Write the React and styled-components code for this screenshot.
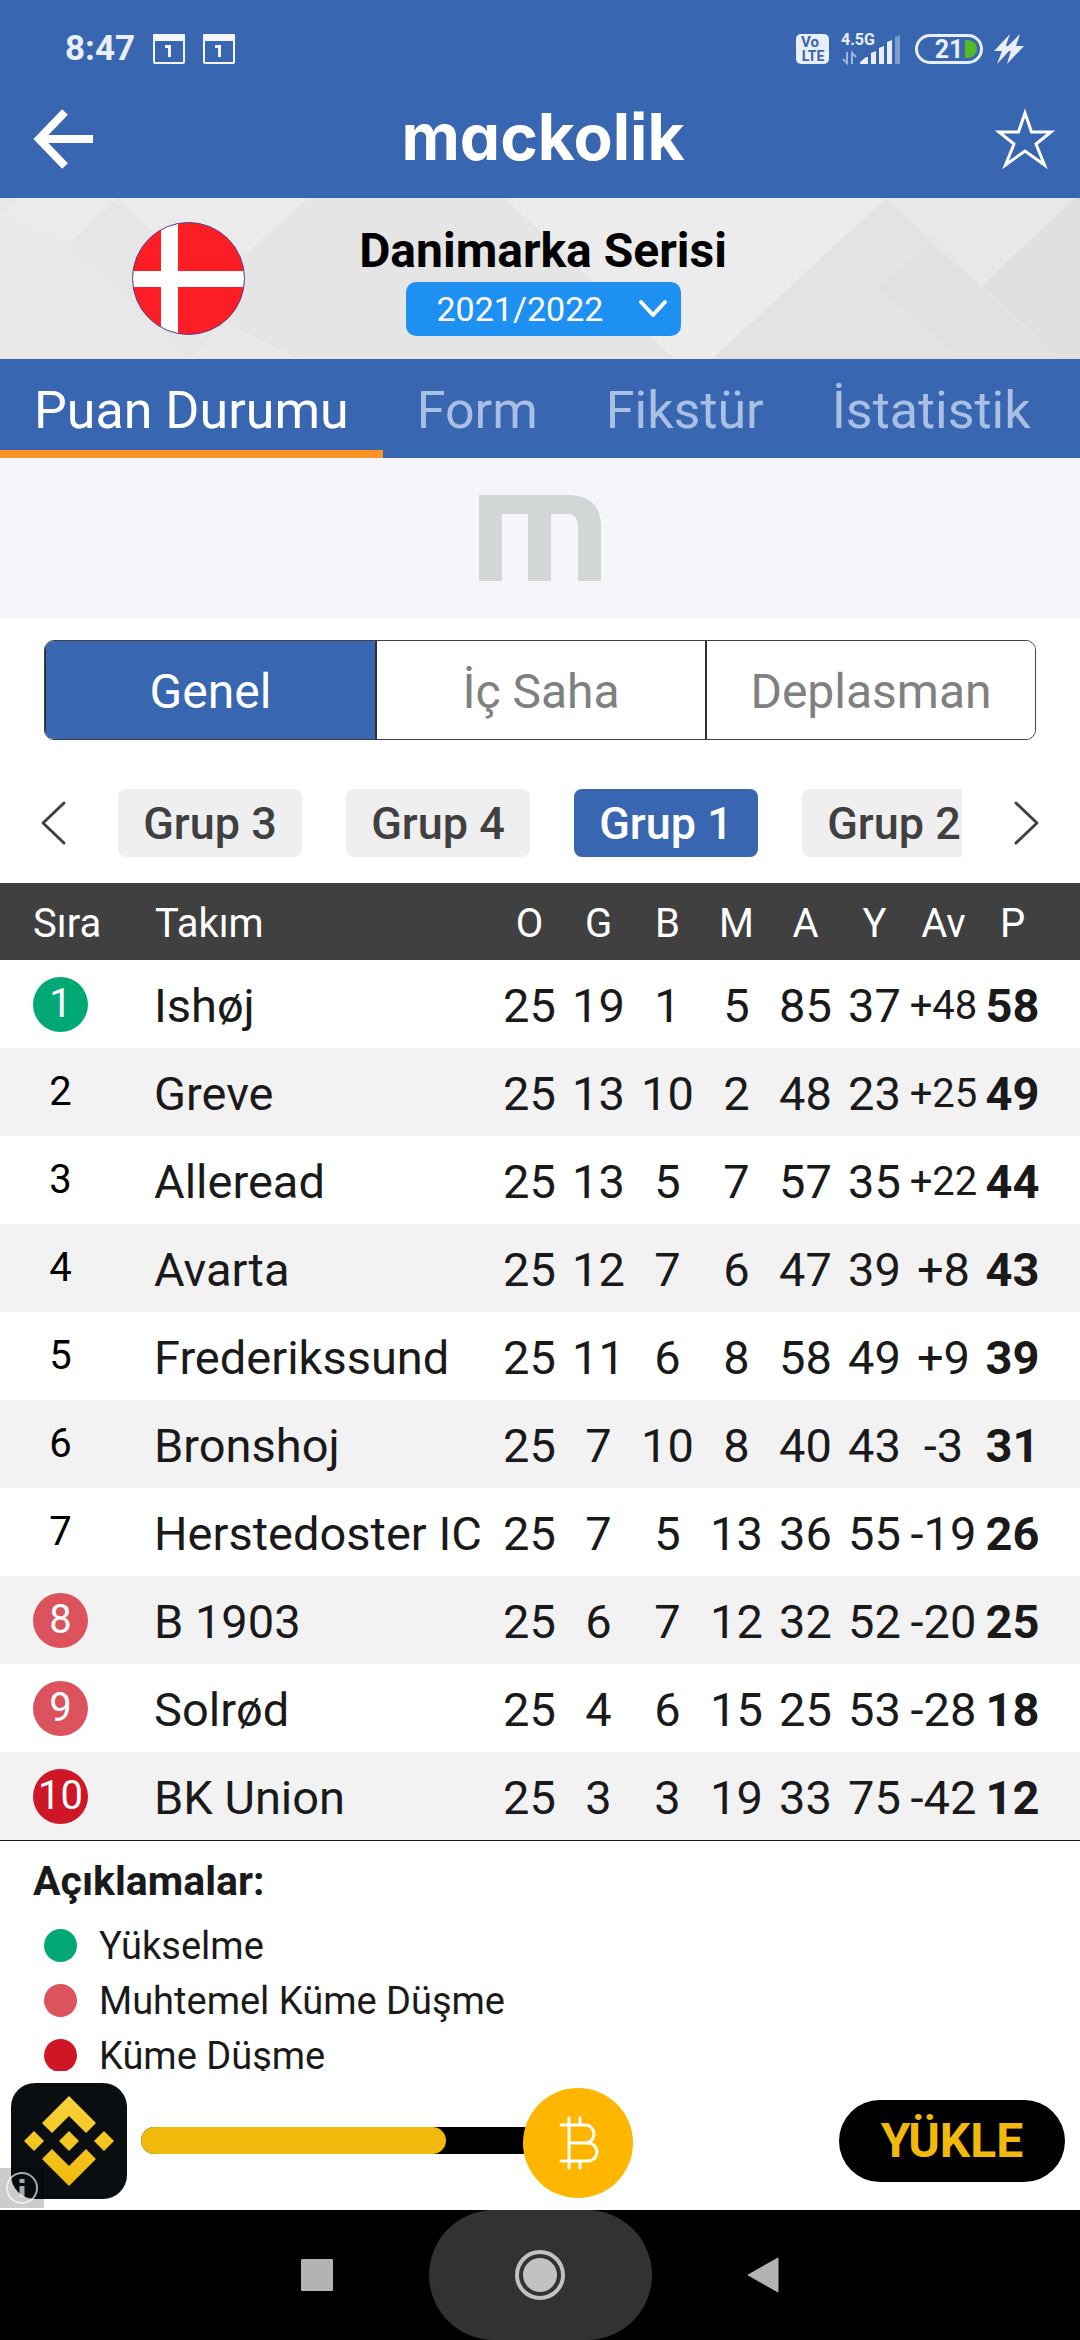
import React from "react";
import styled, { createGlobalStyle, css } from "styled-components";

const blue = "#3966b0";

const GlobalStyle = createGlobalStyle`
  *, *::before, *::after { box-sizing: border-box; }
  html, body { margin: 0; padding: 0; background: #fff; }
  body { font-family: Roboto, "Liberation Sans", sans-serif; color: #1a1a1a; }
  button, select { font-family: inherit; }
  button { margin: 0; padding: 0; border: 0; background: none; cursor: pointer; }
  svg { display: block; flex: none; overflow: visible; }
`;

const Page = styled.div`
  display: flex;
  flex-direction: column;
  height: 100vh;
  overflow: hidden;
  background: #fff;
`;

const StatusBar = styled.div`
  flex: none;
  display: flex;
  align-items: center;
  justify-content: space-between;
  height: 80px;
  padding: 18px 56px 0 65px;
  background: ${blue};
  color: #e9effa;
`;

const StatusGroup = styled.div`
  display: flex;
  align-items: center;
  gap: ${(p) => p.$gap}px;
`;

const Clock = styled.time`
  font-size: 35px;
  line-height: 40px;
  font-weight: 700;
`;

const Header = styled.header`
  flex: none;
  display: grid;
  grid-template-columns: 1fr auto 1fr;
  align-items: center;
  height: 118px;
  padding: 0 26px 0 32px;
  background: ${blue};
`;

const IconButton = styled.button`
  justify-self: ${(p) => p.$side || "center"};
  display: flex;
  align-items: center;
  justify-content: center;
`;

const Brand = styled.h1`
  margin: 0;
  padding-bottom: 4px;
  color: #fff;
  font-family: Inter, Lato, sans-serif;
  font-feature-settings: "cv11", "ss07";
  font-weight: 700;
  font-size: 64px;
  line-height: 112px;
`;

const Banner = styled.section`
  flex: none;
  position: relative;
  display: grid;
  grid-template-columns: 245px 1fr 239px;
  align-items: center;
  height: 161px;
  background: #e9e9e9;
`;

const BannerArt = styled.svg`
  position: absolute;
  inset: 0;
  width: 100%;
  height: 100%;
`;

const FlagSlot = styled.div`
  position: relative;
  display: flex;
  justify-content: flex-end;
`;

const BannerInfo = styled.div`
  position: relative;
  display: flex;
  flex-direction: column;
  align-items: center;
  gap: 3px;
  padding-top: 1px;
`;

const LeagueName = styled.h2`
  margin: 0;
  color: #000;
  font-size: 48px;
  line-height: 56px;
  font-weight: 700;
`;

const SeasonPicker = styled.div`
  position: relative;
  display: flex;
  align-items: center;
  width: 275px;
  height: 54px;
  border-radius: 10px;
  background: #1e90f2;
  svg { position: absolute; right: 13px; pointer-events: none; }
`;

const SeasonSelect = styled.select`
  appearance: none;
  width: 100%;
  height: 100%;
  padding: 0 0 0 31px;
  border: 0;
  background: transparent;
  color: #fff;
  font-size: 34px;
  line-height: 54px;
`;

const Tabs = styled.nav`
  flex: none;
  display: flex;
  height: 99px;
  background: ${blue};
`;

const Tab = styled.a`
  padding: 6px 34px 0;
  border-bottom: 8px solid ${(p) => (p.$active ? "#fd9426" : "transparent")};
  color: ${(p) => (p.$active ? "#fff" : "#a9bfe4")};
  font-size: 52px;
  line-height: 92px;
  text-decoration: none;
  white-space: nowrap;
`;

const TopAd = styled.aside`
  flex: none;
  display: flex;
  align-items: center;
  justify-content: center;
  height: 160px;
  background: #f4f6fb;
`;

const Segments = styled.div`
  flex: none;
  display: grid;
  grid-template-columns: repeat(3, 1fr);
  height: 100px;
  margin: 22px 44px 0;
  border: 1px solid #404040;
  border-radius: 10px;
  overflow: hidden;
`;

const Segment = styled.button`
  padding-top: 4px;
  border-left: ${(p) => (p.$first ? "1px" : "2px")} solid #303030;
  background: ${(p) => (p.$active ? blue : "#fff")};
  color: ${(p) => (p.$active ? "#fff" : "#808080")};
  font-size: 48px;
  line-height: 94px;
`;

const Groups = styled.div`
  flex: none;
  display: flex;
  align-items: center;
  height: 143px;
  padding: 49px 40px 26px;
  gap: 51px;
`;

const GroupList = styled.div`
  flex: 1;
  display: flex;
  gap: 44px;
  min-width: 0;
  overflow: hidden;
`;

const GroupChip = styled.button`
  flex: none;
  width: 184px;
  height: 68px;
  padding-top: 2px;
  border-radius: 8px;
  background: ${(p) => (p.$active ? blue : "#efefef")};
  color: ${(p) => (p.$active ? "#fff" : "#404040")};
  font-size: 45px;
  line-height: 66px;
  font-weight: 500;
`;

const Scroller = styled.main`
  flex: 1;
  min-height: 0;
  overflow: hidden;
`;

const Table = styled.table`
  width: 100%;
  table-layout: fixed;
  border-collapse: collapse;
  border-bottom: 1px solid #1a1a1a;
`;

const Col = styled.col`
  width: ${(p) => (p.$w ? p.$w + "px" : "auto")};
`;

const HeadRow = styled.tr`
  height: 77px;
  background: #404040;
`;

const HeadCell = styled.th`
  padding: 4px 0 0 ${(p) => p.$left || 0}px;
  color: #fff;
  font-size: 40px;
  line-height: 73px;
  font-weight: 400;
  text-align: ${(p) => (p.$left ? "left" : "center")};
`;

const Row = styled.tr`
  height: 88px;
  &:nth-child(even) { background: #f2f2f2; }
`;

const cell = css`
  padding: 4px 0 0;
  font-size: 47px;
  line-height: 84px;
  white-space: nowrap;
`;

const RankCell = styled.td`
  padding: 0 0 0 33px;
`;

const Rank = styled.span`
  display: block;
  width: 55px;
  height: 55px;
  border-radius: 50%;
  background: ${(p) => p.$color || "transparent"};
  color: ${(p) => (p.$color ? "#fff" : "#000")};
  font-size: 40px;
  line-height: 54px;
  text-align: center;
`;

const TeamCell = styled.td`
  ${cell}
`;

const NumCell = styled.td`
  ${cell}
  font-size: ${(p) => (p.$small ? 40 : 47)}px;
  font-weight: ${(p) => (p.$bold ? 700 : 400)};
  text-align: center;
`;

const Legend = styled.section`
  padding: 16px 33px 0;
`;

const LegendTitle = styled.h3`
  margin: 0;
  font-size: 41px;
  line-height: 48px;
  font-weight: 700;
`;

const LegendList = styled.ul`
  margin: 13px 0 0;
  padding: 0 0 0 11px;
  list-style: none;
`;

const LegendItem = styled.li`
  display: flex;
  align-items: center;
  gap: 22px;
  height: 55px;
  font-size: 38px;
  line-height: 58px;
`;

const Dot = styled.span`
  width: 33px;
  height: 33px;
  border-radius: 50%;
  background: ${(p) => p.$color};
`;

const BottomAd = styled.aside`
  flex: none;
  position: relative;
  display: flex;
  align-items: center;
  height: 139px;
  padding: 0 15px 0 11px;
  background: #fff;
`;

const AppIcon = styled.div`
  display: flex;
  align-items: center;
  justify-content: center;
  width: 116px;
  height: 116px;
  border-radius: 24px;
  background: #0b0e11;
`;

const Track = styled.div`
  display: flex;
  align-items: center;
  width: 396px;
  height: 27px;
  margin-left: 14px;
  border-radius: 14px;
  background: #000;
`;

const Fill = styled.div`
  width: 305px;
  height: 27px;
  border-radius: 14px;
  background: #f0b90b;
`;

const Coin = styled.div`
  display: flex;
  align-items: center;
  justify-content: center;
  width: 110px;
  height: 110px;
  margin: 4px auto 0 -14px;
  border-radius: 50%;
  background: #ffb600;
`;

const InstallButton = styled.button`
  width: 226px;
  height: 82px;
  border-radius: 41px;
  background: #000;
  color: #f0b90b;
  font-size: 48px;
  line-height: 82px;
  font-weight: 700;
`;

const AdInfo = styled.button`
  position: absolute;
  left: 0;
  bottom: 2px;
  display: flex;
  align-items: center;
  justify-content: center;
  width: 44px;
  height: 40px;
  background: rgba(0, 0, 0, 0.2);
`;

const SystemNav = styled.nav`
  flex: none;
  display: flex;
  align-items: center;
  justify-content: center;
  height: 130px;
  background: #000;
`;

const NavButton = styled.button`
  display: flex;
  align-items: center;
  justify-content: center;
  width: 223px;
  height: 130px;
  border-radius: 65px;
  background: ${(p) => (p.$pressed ? "#323232" : "transparent")};
`;

const GREEN = "#00a874";
const PINK = "#dc525d";
const RED = "#ce1626";

const columns = ["O", "G", "B", "M", "A", "Y", "Av", "P"];

const teams = [
  ["Ishøj", GREEN, 25, 19, 1, 5, 85, 37, "+48", 58],
  ["Greve", null, 25, 13, 10, 2, 48, 23, "+25", 49],
  ["Alleread", null, 25, 13, 5, 7, 57, 35, "+22", 44],
  ["Avarta", null, 25, 12, 7, 6, 47, 39, "+8", 43],
  ["Frederikssund", null, 25, 11, 6, 8, 58, 49, "+9", 39],
  ["Bronshoj", null, 25, 7, 10, 8, 40, 43, "-3", 31],
  ["Herstedoster IC", null, 25, 7, 5, 13, 36, 55, "-19", 26],
  ["B 1903", PINK, 25, 6, 7, 12, 32, 52, "-20", 25],
  ["Solrød", PINK, 25, 4, 6, 15, 25, 53, "-28", 18],
  ["BK Union", RED, 25, 3, 3, 19, 33, 75, "-42", 12],
];

const legend = [
  ["Yükselme", GREEN],
  ["Muhtemel Küme Düşme", PINK],
  ["Küme Düşme", RED],
];

const SvgText = styled.text`
  font-family: Roboto, "Liberation Sans", sans-serif;
  font-weight: 700;
`;

function CalendarIcon() {
  return (
    <svg width="32" height="30" viewBox="0 0 32 30" aria-hidden="true">
      <rect x="1" y="1" width="30" height="28" rx="1" fill="none" stroke="#f3f6fc" strokeWidth="2" />
      <rect x="0" y="0" width="32" height="7" rx="1" fill="#f3f6fc" />
      <path d="M12 12.5h4.500V23" fill="none" stroke="#f3f6fc" strokeWidth="3" />
    </svg>
  );
}

function VolteIcon() {
  return (
    <svg width="33" height="30" viewBox="0 0 33 30" aria-hidden="true">
      <rect width="33" height="30" rx="5" fill="#e9effa" />
      <SvgText x="14" y="13" fontSize="15" textAnchor="middle" fill={blue}>Vo</SvgText>
      <SvgText x="17" y="27" fontSize="14" textAnchor="middle" fill={blue}>LTE</SvgText>
    </svg>
  );
}

function SignalIcon() {
  return (
    <svg width="64" height="34" viewBox="0 0 64 34" aria-hidden="true">
      <SvgText x="1" y="13" fontSize="16" fill="#e9effa">4.5G</SvgText>
      <g fill="none" stroke="#9db4dc" strokeWidth="2">
        <path d="M7 20v11L3 27" />
        <path d="M12 32V21l4 4" />
      </g>
      <g fill="#e9effa">
        <path d="M20 32v-2l6-5h2v7z" />
        <path d="M31 32V21l5-2v13z" />
        <path d="M39 32V16l5-2v18z" />
        <path d="M47 32V10l5-2v24z" />
      </g>
      <path d="M55 32V5l5-2v29z" fill="#7f9ccf" />
    </svg>
  );
}

function BatteryIcon() {
  return (
    <svg width="68" height="30" viewBox="0 0 68 30" aria-hidden="true">
      <rect x="1.500" y="1.500" width="65" height="27" rx="13.500" fill="none" stroke="#e9effa" strokeWidth="3" />
      <SvgText x="34" y="24" fontSize="25" textAnchor="middle" fill="#e9effa">21</SvgText>
      <path d="M50 6h3a9 9 0 0 1 0 18h-3z" fill="#52b925" />
    </svg>
  );
}

function BoltIcon() {
  return (
    <svg width="30" height="30" viewBox="0 0 30 30" aria-hidden="true">
      <path d="M16 0 0 17h8L3 30l12-13h-5z M26 0 13 13h5L13 30 30 12h-8z" fill="#e9effa" />
      <path d="M9 12h14v5H7z" fill="#e9effa" />
    </svg>
  );
}

function BannerBackdrop() {
  return (
    <BannerArt viewBox="0 0 1080 161" preserveAspectRatio="none" aria-hidden="true">
      <path d="M0 18 18 0H118L70 45z" fill="#ebebeb" />
      <path d="M118 0 240 108 190 161 70 45z" fill="#e6e6e6" />
      <path d="M0 105 70 45 190 161H0z" fill="#e8e8e8" />
      <path d="M118 0H308L240 60 200 80z" fill="#ebebeb" />
      <path d="M308 0H505L675 161H426L300 161 190 108z" fill="#e5e5e5" />
      <path d="M505 0H886L712 161H675z" fill="#ececec" />
      <path d="M886 0 1060 161H712z" fill="#e3e3e3" />
      <path d="M886 0H1075L982 88z" fill="#e8e8e8" />
      <path d="M1075 0h5v161h-20L982 88z" fill="#e0e0e0" />
      <path d="M930 45 1060 161H960L880 90z" fill="#e1e1e1" />
    </BannerArt>
  );
}

function Flag() {
  return (
    <svg width="113" height="113" viewBox="0 0 113 113" role="img" aria-label="Danimarka">
      <clipPath id="flag-disc"><circle cx="56.500" cy="56.500" r="56" /></clipPath>
      <g clipPath="url(#flag-disc)">
        <rect width="113" height="113" fill="#fd1d24" />
        <rect x="29" width="17" height="113" fill="#fff" />
        <rect y="49" width="113" height="16" fill="#fff" />
      </g>
      <circle cx="56.500" cy="56.500" r="56" fill="none" stroke="#5a3f8c" strokeWidth="1" />
    </svg>
  );
}

function MarkIcon() {
  return (
    <svg width="122" height="86" viewBox="0 0 122 86" aria-hidden="true">
      <g fill="#d2d6d5">
        <rect width="82" height="19" />
        <rect width="23" height="86" />
        <rect x="49" width="23" height="86" />
        <path d="M80 0H88Q122 0 122 32V86H99V32Q99 19 88 19H80z" />
      </g>
    </svg>
  );
}

function Chevron({ d, w, h, color, stroke }) {
  return (
    <svg width={w} height={h} viewBox={`0 0 ${w} ${h}`} aria-hidden="true">
      <path d={d} fill="none" stroke={color} strokeWidth={stroke} strokeLinecap="round" strokeLinejoin="round" />
    </svg>
  );
}

export default function App() {
  return (
    <Page>
      <GlobalStyle />
      <StatusBar>
        <StatusGroup $gap={18}>
          <Clock>8:47</Clock>
          <CalendarIcon />
          <CalendarIcon />
        </StatusGroup>
        <StatusGroup $gap={11}>
          <VolteIcon />
          <SignalIcon />
          <BatteryIcon />
          <BoltIcon />
        </StatusGroup>
      </StatusBar>

      <Header>
        <IconButton $side="start" aria-label="Geri">
          <svg width="62" height="60" viewBox="0 0 62 60" aria-hidden="true">
            <path d="M33 3 7 30l26 27M7 30h54" fill="none" stroke="#fff" strokeWidth="8" />
          </svg>
        </IconButton>
        <Brand>mackolik</Brand>
        <IconButton $side="end" aria-label="Favorilere ekle">
          <svg width="58" height="58" viewBox="0 0 58 58" aria-hidden="true">
            <path d="M29 3 35.500 22H55L40 34l8.500 21L29 41 9.500 55 18 34 3 22h19.500z" fill="none" stroke="#fff" strokeWidth="3" />
          </svg>
        </IconButton>
      </Header>

      <Banner>
        <BannerBackdrop />
        <FlagSlot><Flag /></FlagSlot>
        <BannerInfo>
          <LeagueName>Danimarka Serisi</LeagueName>
          <SeasonPicker>
            <SeasonSelect aria-label="Sezon" defaultValue="2021/2022">
              <option>2021/2022</option>
            </SeasonSelect>
            <Chevron w={30} h={20} d="M3 3l12 13L27 3" color="#fff" stroke={4} />
          </SeasonPicker>
        </BannerInfo>
      </Banner>

      <Tabs>
        <Tab href="#puan" $active>Puan Durumu</Tab>
        <Tab href="#form">Form</Tab>
        <Tab href="#fikstur">Fikstür</Tab>
        <Tab href="#istatistik">İstatistik</Tab>
      </Tabs>

      <TopAd><MarkIcon /></TopAd>

      <Segments>
        <Segment $first $active>Genel</Segment>
        <Segment>İç Saha</Segment>
        <Segment>Deplasman</Segment>
      </Segments>

      <Groups>
        <IconButton aria-label="Önceki gruplar">
          <Chevron w={27} h={44} d="M24 2 3 22l21 20" color="#404040" stroke={3} />
        </IconButton>
        <GroupList>
          <GroupChip>Grup 3</GroupChip>
          <GroupChip>Grup 4</GroupChip>
          <GroupChip $active>Grup 1</GroupChip>
          <GroupChip>Grup 2</GroupChip>
        </GroupList>
        <IconButton aria-label="Sonraki gruplar">
          <Chevron w={27} h={44} d="M3 2l21 20L3 42" color="#404040" stroke={3} />
        </IconButton>
      </Groups>

      <Scroller>
        <Table>
          <colgroup>
            <Col $w={154} />
            <Col />
            {columns.map((c) => <Col key={c} $w={69} />)}
            <Col $w={33} />
          </colgroup>
          <thead>
            <HeadRow>
              <HeadCell $left={33}>Sıra</HeadCell>
              <HeadCell $left={1}>Takım</HeadCell>
              {columns.map((c) => <HeadCell key={c}>{c}</HeadCell>)}
              <HeadCell as="td" />
            </HeadRow>
          </thead>
          <tbody>
            {teams.map(([name, color, ...stats], i) => (
              <Row key={name}>
                <RankCell><Rank $color={color}>{i + 1}</Rank></RankCell>
                <TeamCell>{name}</TeamCell>
                {stats.map((v, j) => (
                  <NumCell key={columns[j]} $bold={j === 7} $small={/^\+\d\d/.test(v)}>{v}</NumCell>
                ))}
                <NumCell />
              </Row>
            ))}
          </tbody>
        </Table>
        <Legend>
          <LegendTitle>Açıklamalar:</LegendTitle>
          <LegendList>
            {legend.map(([label, color]) => (
              <LegendItem key={label}><Dot $color={color} />{label}</LegendItem>
            ))}
          </LegendList>
        </Legend>
      </Scroller>

      <BottomAd>
        <AppIcon>
          <svg width="90" height="90" viewBox="0 0 90 90" aria-hidden="true">
            <linearGradient id="gold" gradientUnits="userSpaceOnUse" x1="0" y1="0" x2="0" y2="90">
              <stop offset="0" stopColor="#f8d33a" />
              <stop offset="1" stopColor="#f0b90b" />
            </linearGradient>
            <g fill="url(#gold)">
              <path d="M45 0 72 27 62 37 45 20 28 37 18 27z" />
              <path d="M45 90 72 63 62 53 45 70 28 53 18 63z" />
              <path d="M45 35 55 45 45 55 35 45z" />
              <path d="M10 35 20 45 10 55 0 45z" />
              <path d="M80 35 90 45 80 55 70 45z" />
            </g>
          </svg>
        </AppIcon>
        <Track><Fill /></Track>
        <Coin>
          <svg width="42" height="54" viewBox="0 0 42 54" aria-hidden="true">
            <path d="M4 9h24a9 9 0 0 1 0 18H12M28 27h3a9 9 0 0 1 0 18H4M12 2v50M23 2v7M23 45v7" fill="none" stroke="#fff" strokeWidth="3" strokeLinecap="round" />
          </svg>
        </Coin>
        <InstallButton>YÜKLE</InstallButton>
        <AdInfo aria-label="Reklam bilgisi">
          <svg width="34" height="34" viewBox="0 0 34 34" aria-hidden="true">
            <g fill="none" stroke="#fff" strokeOpacity="0.65">
              <circle cx="17" cy="17" r="15" strokeWidth="2" />
              <path d="M17 8v4M17 15v11" strokeWidth="5" />
            </g>
          </svg>
        </AdInfo>
      </BottomAd>

      <SystemNav>
        <NavButton aria-label="Son uygulamalar">
          <svg width="32" height="32" viewBox="0 0 32 32" aria-hidden="true"><rect width="32" height="32" rx="1" fill="#b3b3b3" /></svg>
        </NavButton>
        <NavButton $pressed aria-label="Ana ekran">
          <svg width="50" height="50" viewBox="0 0 50 50" aria-hidden="true">
            <circle cx="25" cy="25" r="23" fill="none" stroke="#c2c2c2" strokeWidth="4" />
            <circle cx="25" cy="25" r="17" fill="#c2c2c2" />
          </svg>
        </NavButton>
        <NavButton aria-label="Geri">
          <svg width="32" height="36" viewBox="0 0 32 36" aria-hidden="true"><path d="M1 18 31 1v34z" fill="#b3b3b3" stroke="#b3b3b3" strokeLinejoin="round" /></svg>
        </NavButton>
      </SystemNav>
    </Page>
  );
}
